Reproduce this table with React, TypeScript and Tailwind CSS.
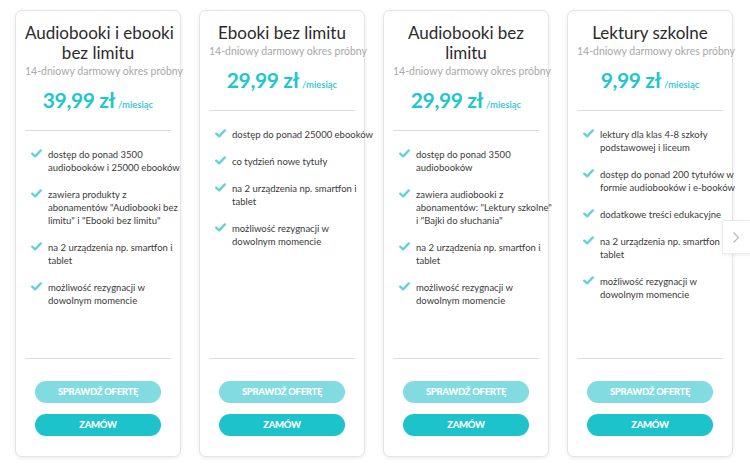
import React from "react";

type Plan = {
  title: string[];
  price: string;
  features: string[][];
};

const plans: Plan[] = [
  {
    title: ["Audiobooki i ebooki", "bez limitu"],
    price: "39,99 zł",
    features: [
      ["dostęp do ponad 3500", "audiobooków i 25000 ebooków"],
      ["zawiera produkty z", "abonamentów \"Audiobooki bez", "limitu\" i \"Ebooki bez limitu\""],
      ["na 2 urządzenia np. smartfon i", "tablet"],
      ["możliwość rezygnacji w", "dowolnym momencie"],
    ],
  },
  {
    title: ["Ebooki bez limitu"],
    price: "29,99 zł",
    features: [
      ["dostęp do ponad 25000 ebooków"],
      ["co tydzień nowe tytuły"],
      ["na 2 urządzenia np. smartfon i", "tablet"],
      ["możliwość rezygnacji w", "dowolnym momencie"],
    ],
  },
  {
    title: ["Audiobooki bez", "limitu"],
    price: "29,99 zł",
    features: [
      ["dostęp do ponad 3500", "audiobooków"],
      ["zawiera audiobooki z", "abonamentów: \"Lektury szkolne\"", "i \"Bajki do słuchania\""],
      ["na 2 urządzenia np. smartfon i", "tablet"],
      ["możliwość rezygnacji w", "dowolnym momencie"],
    ],
  },
  {
    title: ["Lektury szkolne"],
    price: "9,99 zł",
    features: [
      ["lektury dla klas 4-8 szkoły", "podstawowej i liceum"],
      ["dostęp do ponad 200 tytułów w", "formie audiobooków i e-booków"],
      ["dodatkowe treści edukacyjne"],
      ["na 2 urządzenia np. smartfon i", "tablet"],
      ["możliwość rezygnacji w", "dowolnym momencie"],
    ],
  },
];

function Check() {
  return (
    <svg width="11" height="9" viewBox="0 0 11 9" className="shrink-0 mt-[1px]">
      <path d="M1.2 4.6 L4.2 7.4 L9.8 1.4" fill="none" stroke="#63d1d8" strokeWidth="2.3" strokeLinecap="round" strokeLinejoin="round" />
    </svg>
  );
}

function Card({ plan }: { plan: Plan }) {
  return (
    <div className="w-[166px] h-[447px] shrink-0 flex flex-col rounded-[7px] border border-[#e4e4e4] bg-white shadow-[0_1px_4px_rgba(0,0,0,0.08)] px-[9px]">
      <div className="pt-[12px] text-center text-[17px] leading-[20px] text-[#2b2b2b]">
        {plan.title.map((t, i) => (
          <div key={i} className="whitespace-nowrap">{t}</div>
        ))}
      </div>
      <div className="mt-[1px] text-center text-[10.5px] leading-[14px] text-[#a8a8a8] whitespace-nowrap">
        14-dniowy darmowy okres próbny
      </div>
      <div className="mt-[10px] flex items-baseline justify-center text-[#1fc6cd]">
        <span className="text-[21px] leading-[24px] font-bold tracking-[-0.4px]">{plan.price}</span>
        <span className="ml-[3px] text-[9.5px] font-semibold">/miesiąc</span>
      </div>
      <div className="mt-[18px] h-px bg-[#dcdcdc]" />
      <div className="mt-[17px] flex flex-col gap-[14px] pl-[6px]">
        {plan.features.map((f, i) => (
          <div key={i} className="flex gap-[6px]">
            <Check />
            <div className="text-[9.5px] leading-[13px] text-[#3a3a3a]">
              {f.map((l, j) => (
                <div key={j} className="whitespace-nowrap">{l}</div>
              ))}
            </div>
          </div>
        ))}
      </div>
      <div className="mt-auto h-px bg-[#dcdcdc]" />
      <div className="mt-[22px] mb-[20px] flex flex-col items-center gap-[11px]">
        <button className="w-[126px] h-[22px] rounded-full bg-[#82dbe1] text-white text-[9.5px] font-black tracking-[-0.3px]">
          SPRAWDŹ OFERTĘ
        </button>
        <button className="w-[126px] h-[22px] rounded-full bg-[#1cc3cb] text-white text-[9.5px] font-black tracking-[-0.3px]">
          ZAMÓW
        </button>
      </div>
    </div>
  );
}

export default function App() {
  return (
    <div
      className="relative w-[750px] h-[467px] bg-white overflow-hidden"
      style={{ fontFamily: "Lato, 'Open Sans', sans-serif" }}
    >
      <div className="flex gap-[18px] pt-[10px] pl-[15px]">
        {plans.map((p, i) => (
          <Card key={i} plan={p} />
        ))}
      </div>
      <div className="absolute left-[722px] top-[220px] w-[36px] h-[34px] bg-white border border-[#ececec] shadow-[0_1px_3px_rgba(0,0,0,0.08)] flex items-center pl-[9px]">
        <svg width="8" height="13" viewBox="0 0 8 13">
          <path d="M1.5 1.5 L6.5 6.5 L1.5 11.5" fill="none" stroke="#b5b5b5" strokeWidth="1.1" />
        </svg>
      </div>
    </div>
  );
}
